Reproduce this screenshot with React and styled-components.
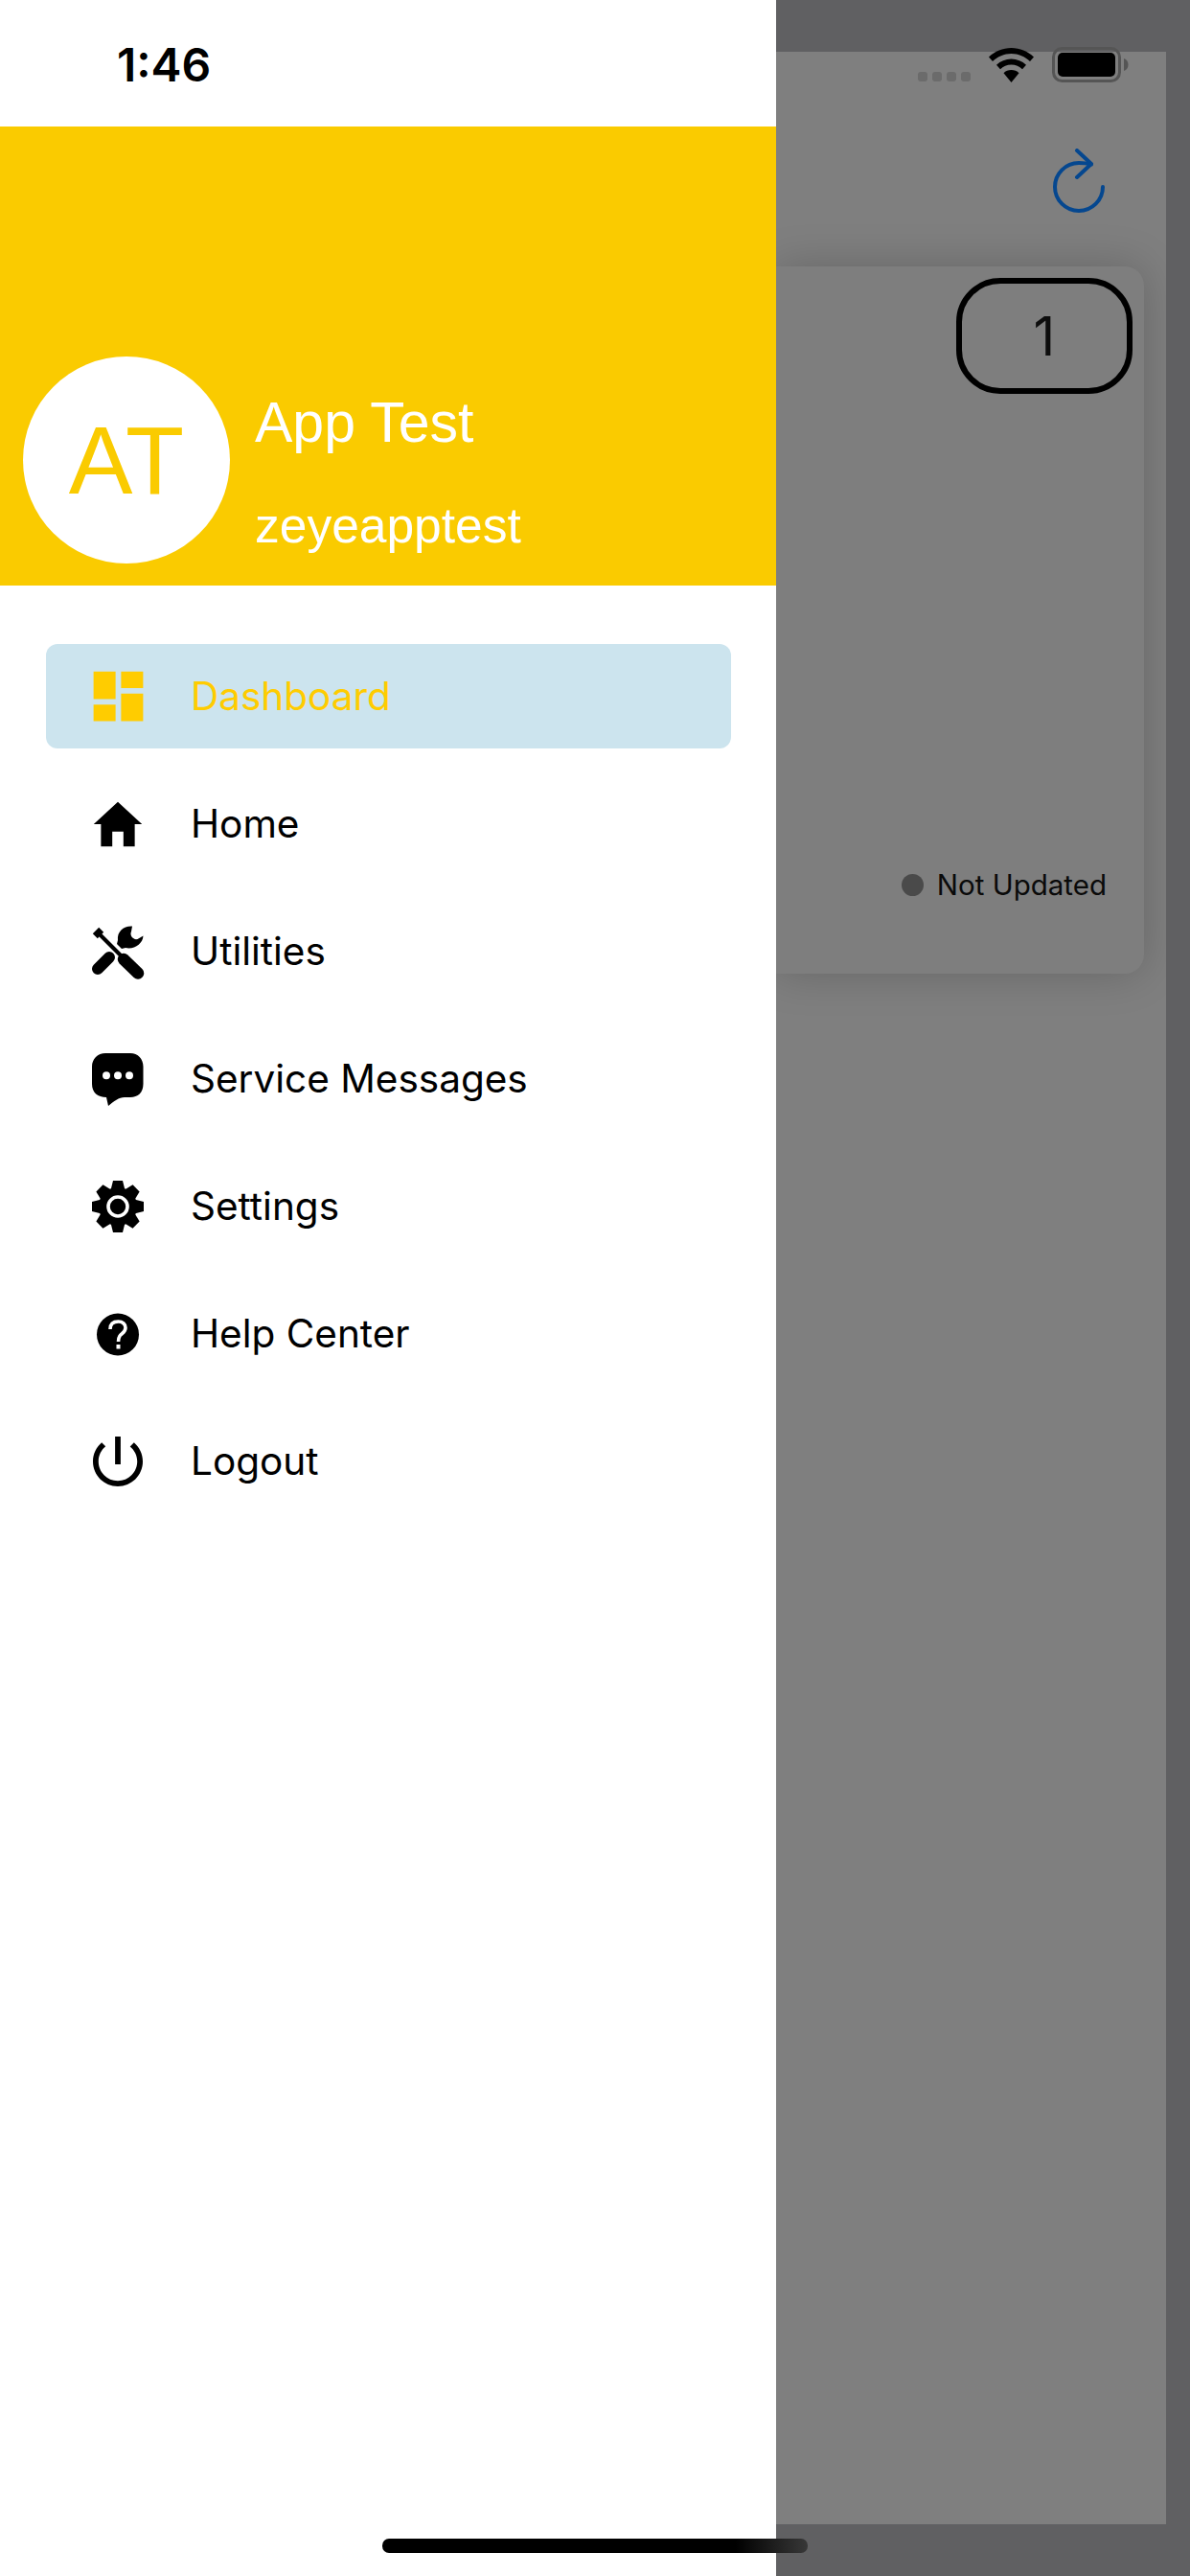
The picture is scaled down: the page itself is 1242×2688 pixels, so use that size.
import React from 'react'
import styled, { createGlobalStyle } from 'styled-components'
import { IoMdHome, IoMdPower } from 'react-icons/io'
import { MdDashboard } from 'react-icons/md'

const GlobalStyle = createGlobalStyle`
  html, body {
    margin: 0;
    padding: 0;
    background: #606062;
  }
`

const Screen = styled.div`
  position: relative;
  display: flex;
  width: 1242px;
  height: 2688px;
  overflow: hidden;
  font-family: Inter, 'Liberation Sans', sans-serif;
`

const Drawer = styled.aside`
  display: flex;
  flex-direction: column;
  flex: 0 0 810px;
  background: #fff;
`

const StatusBar = styled.div`
  height: 132px;
  padding: 42px 0 0 122px;
  box-sizing: border-box;
  font-size: 48px;
  line-height: 52px;
  font-weight: 600;
  color: #000;
`

const Profile = styled.header`
  display: flex;
  align-items: flex-end;
  gap: 26px;
  height: 479px;
  padding: 0 0 23px 24px;
  box-sizing: border-box;
  background: #facb00;
`

const Avatar = styled.div`
  display: flex;
  align-items: center;
  justify-content: center;
  width: 216px;
  height: 216px;
  border-radius: 50%;
  background: #fff;
  color: #facb00;
  font-family: 'Liberation Sans', sans-serif;
  font-size: 100px;
`

const ProfileText = styled.div`
  display: flex;
  flex-direction: column;
  gap: 50px;
  padding-bottom: 14px;
  color: #fff;
  font-family: 'Liberation Sans', sans-serif;
`

const Name = styled.div`
  font-size: 59px;
  line-height: 62px;
`

const Username = styled.div`
  font-size: 51.5px;
  line-height: 52px;
`

const Menu = styled.nav`
  display: flex;
  flex-direction: column;
  gap: 24px;
  padding: 61px 47px 0 48px;
`

const MenuRow = styled.div`
  display: flex;
  align-items: center;
  gap: 39px;
  height: 109px;
  padding-left: 38px;
  border-radius: 12px;
  background: ${p => (p.$active ? '#cce4ee' : 'transparent')};
  color: ${p => (p.$active ? '#ffcc00' : '#000')};
  font-size: 40.5px;
`

const IconSlot = styled.span`
  display: flex;
  align-items: center;
  justify-content: center;
  flex: 0 0 74px;
  height: 74px;
`

const Backdrop = styled.main`
  position: relative;
  flex: 1;
  padding: 54px 25px 54px 0;
  background: #606062;
`

const Panel = styled.div`
  height: 100%;
  background: #7f7f7f;
  overflow: hidden;
`

const PanelHeader = styled.div`
  display: flex;
  justify-content: flex-end;
  align-items: flex-start;
  height: 224px;
  padding: 101px 59px 0 0;
  box-sizing: border-box;
`

const Card = styled.section`
  display: flex;
  flex-direction: column;
  justify-content: space-between;
  align-items: flex-end;
  height: 738px;
  margin-right: 23px;
  padding: 12px 12px 69px 0;
  box-sizing: border-box;
  border-radius: 0 20px 20px 0;
  background: #7e7e7e;
  box-shadow: 0 0 46px rgba(0, 0, 0, 0.2);
`

const CountPill = styled.div`
  display: flex;
  align-items: center;
  justify-content: center;
  width: 184px;
  height: 121px;
  box-sizing: border-box;
  border: 6px solid #000;
  border-radius: 46px;
  font-size: 56px;
  color: #0d0d0d;
`

const UpdateStatus = styled.div`
  display: flex;
  align-items: center;
  gap: 14px;
  margin-right: 27px;
  font-size: 29.5px;
  line-height: 48px;
  color: #0a0a0a;
`

const StatusDot = styled.span`
  width: 23px;
  height: 23px;
  border-radius: 50%;
  background: #4a4a4a;
`

const DeviceIcons = styled.div`
  position: absolute;
  top: 49px;
  right: 64px;
  display: flex;
  align-items: flex-end;
  gap: 19px;
`

const SignalDots = styled.div`
  display: flex;
  gap: 5px;
  padding-bottom: 1px;
`

const SignalDot = styled.span`
  width: 10px;
  height: 10px;
  border-radius: 3px;
  background: #6b6b6b;
`

const HomeIndicator = styled.div`
  position: absolute;
  left: 399px;
  top: 2649px;
  width: 444px;
  height: 15px;
  border-radius: 7px;
  background: linear-gradient(90deg, #000 0 83%, #383838 100%);
`

const ToolsIcon = () => (
  <svg width='74' height='74' viewBox='0 0 74 74'>
    <path d='M52 10.500C43 10 36 16 37 25l-1 4 5 5 4-1c9 2 18-4 18.500-12.500L57.500 24C53 25 49 20 51 16z' />
    <g fill='none' stroke='#000' strokeLinecap='round'>
      <path d='M14 15l5 5' strokeWidth='9' strokeLinecap='butt' />
      <path d='M17 18l24 24' strokeWidth='4' strokeLinecap='butt' />
      <path d='M43 45l15 14.500' strokeWidth='12.500' />
      <path d='M16 55l12-12' strokeWidth='12' />
    </g>
  </svg>
)

const MessageIcon = () => (
  <svg width='74' height='74' viewBox='0 0 74 74'>
    <path d='M24 10h26c8 0 13.500 6 13.500 14v18c0 9-5.500 14-13.500 14h-6c-6 0-11 4-17 9l-2-9c-9 0-15-5-15-14V24c0-8 6-14 14-14z' />
    <circle cx='25' cy='33.300' r='4' fill='#fff' />
    <circle cx='37' cy='33.300' r='4' fill='#fff' />
    <circle cx='49' cy='33.300' r='4' fill='#fff' />
  </svg>
)

const GearIcon = () => (
  <svg width='74' height='74' viewBox='0 0 74 74'>
    <circle cx='37' cy='37' r='20' />
    {[0, 45, 90, 135, 180, 225, 270, 315].map(angle => (
      <polygon key={angle} points='32,10 42,10 45,22 29,22' transform={`rotate(${angle} 37 37)`} />
    ))}
    <circle cx='37' cy='37' r='10' stroke='#fff' strokeWidth='3.600' />
  </svg>
)

const HelpIcon = () => (
  <svg width='74' height='74' viewBox='0 0 74 74'>
    <circle cx='37' cy='37.500' r='22' />
    <path
      d='M29 32c0-6 4-8 8.500-8s7.500 3 7.500 6.500c0 4.500-4 6-6 8.500-1 1.500-1.500 3-1.500 6'
      fill='none'
      stroke='#fff'
      strokeWidth='3.600'
    />
    <rect x='35.500' y='48' width='4' height='4.500' fill='#fff' />
  </svg>
)

const RefreshIcon = () => (
  <svg width='60' height='70' viewBox='0 0 60 70' fill='none' stroke='#05478f' strokeWidth='4' strokeLinecap='round' strokeLinejoin='round'>
    <path d='M26 2l15 14-15 14' />
    <path d='M41 16.500C37 15.500 32 15 28 15A25 25 0 1 0 53 40' />
  </svg>
)

const WifiIcon = () => (
  <svg width='47' height='36' viewBox='0 0 47 36'>
    <path d='M23.500 0C14.500 0 6.500 3.500 0 9.500l4 4.500c5.200-5 12-8 19.500-8S37.800 9 43 14l4-4.500C40.500 3.500 32.500 0 23.500 0z' />
    <path d='M23.500 11.500c-6 0-11.200 2.300-15.500 6.200l4 4.500c3-2.800 7-4.700 11.500-4.700S32 19.400 35 22.200l4-4.500c-4.300-3.900-9.500-6.200-15.500-6.200z' />
    <path d='M23.500 23c-3.200 0-6 1.200-8 3.200L23.500 36l8-9.800c-2-2-4.800-3.200-8-3.200z' />
  </svg>
)

const BatteryIcon = () => (
  <svg width='80' height='37' viewBox='0 0 80 37'>
    <rect x='1.500' y='1.500' width='69' height='34' rx='9' fill='none' stroke='#555' strokeWidth='3' />
    <rect x='6' y='6' width='60' height='25' rx='5' fill='#000' />
    <path d='M75 12c3 1 4.500 3.500 4.500 6.500S78 24 75 25z' fill='#555' />
  </svg>
)

const menuItems = [
  { label: 'Dashboard', icon: <MdDashboard size={69} />, active: true },
  { label: 'Home', icon: <IoMdHome size={62} /> },
  { label: 'Utilities', icon: <ToolsIcon /> },
  { label: 'Service Messages', icon: <MessageIcon /> },
  { label: 'Settings', icon: <GearIcon /> },
  { label: 'Help Center', icon: <HelpIcon /> },
  { label: 'Logout', icon: <IoMdPower size={64} /> }
]

const App = () => {
  return (
    <Screen>
      <GlobalStyle />
      <Drawer>
        <StatusBar>1:46</StatusBar>
        <Profile>
          <Avatar>AT</Avatar>
          <ProfileText>
            <Name>App Test</Name>
            <Username>zeyeapptest</Username>
          </ProfileText>
        </Profile>
        <Menu>
          {menuItems.map(item => (
            <MenuRow key={item.label} $active={item.active}>
              <IconSlot>{item.icon}</IconSlot>
              {item.label}
            </MenuRow>
          ))}
        </Menu>
      </Drawer>
      <Backdrop>
        <Panel>
          <PanelHeader>
            <RefreshIcon />
          </PanelHeader>
          <Card>
            <CountPill>1</CountPill>
            <UpdateStatus>
              <StatusDot />
              Not Updated
            </UpdateStatus>
          </Card>
        </Panel>
        <DeviceIcons>
          <SignalDots>
            <SignalDot />
            <SignalDot />
            <SignalDot />
            <SignalDot />
          </SignalDots>
          <WifiIcon />
          <BatteryIcon />
        </DeviceIcons>
      </Backdrop>
      <HomeIndicator />
    </Screen>
  )
}

export default App
